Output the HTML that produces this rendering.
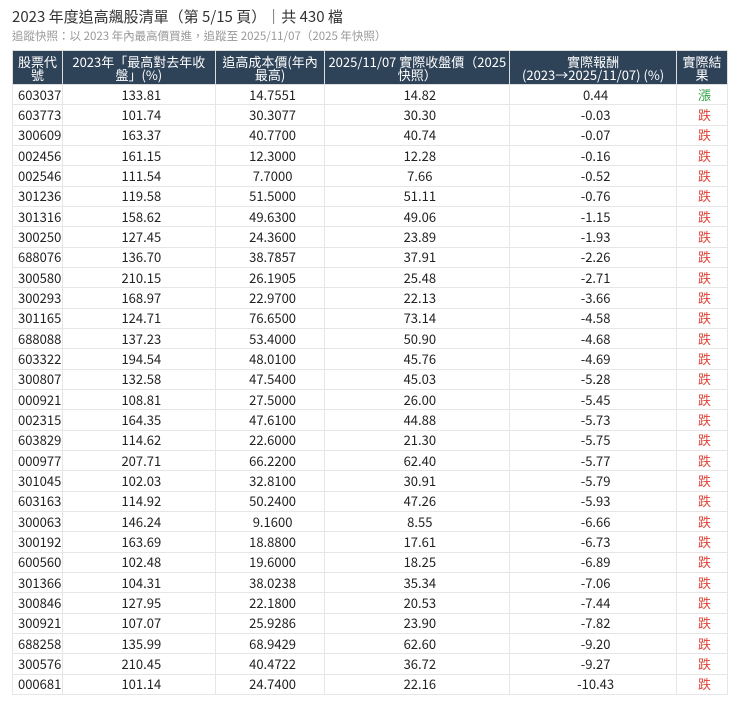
<!DOCTYPE html>
<html><head><meta charset="utf-8"><style>
body{margin:0;background:#fff;font-family:"Noto Sans CJK TC",sans-serif;color:#222;}
.t{position:absolute;left:12px;top:7px;font-size:15px;color:#333;line-height:20px;}
.s{position:absolute;left:12px;top:28px;font-size:11.5px;color:#999;line-height:16px;}
table{position:absolute;left:12px;top:50px;border-collapse:collapse;width:716px;font-size:13px;}
th{background:#2e4258;color:#fff;font-weight:normal;height:33px;line-height:13px;padding:0 8px;border:1px solid #ddd;}
td{height:19.33px;padding:0 0 0 5px;border:1px solid #e6e6e6;text-align:center;line-height:14px;}
td:first-child{text-align:left;}
.r{color:#e0453a}.g{color:#2ea043}
</style></head><body>
<div class="t">2023 年度追高飆股清單（第 5/15 頁）｜共 430 檔</div>
<div class="s">追蹤快照：以 2023 年內最高價買進，追蹤至 2025/11/07（2025 年快照）</div>
<table>
<colgroup><col style="width:50px"><col style="width:153px"><col style="width:110px"><col style="width:185px"><col style="width:167px"><col style="width:51px"></colgroup>
<tr><th style="padding:0 2px">股票代號</th><th>2023年「最高對去年收盤」(%)</th><th style="padding:0 2px">追高成本價(年內最高)</th><th style="padding:0 2px">2025/11/07 實際收盤價（2025快照）</th><th>實際報酬<br>(2023→2025/11/07) (%)</th><th style="padding:0 2px">實際結果</th></tr>
<tr><td>603037</td><td>133.81</td><td>14.7551</td><td>14.82</td><td>0.44</td><td class="g">漲</td></tr>
<tr><td>603773</td><td>101.74</td><td>30.3077</td><td>30.30</td><td>-0.03</td><td class="r">跌</td></tr>
<tr><td>300609</td><td>163.37</td><td>40.7700</td><td>40.74</td><td>-0.07</td><td class="r">跌</td></tr>
<tr><td>002456</td><td>161.15</td><td>12.3000</td><td>12.28</td><td>-0.16</td><td class="r">跌</td></tr>
<tr><td>002546</td><td>111.54</td><td>7.7000</td><td>7.66</td><td>-0.52</td><td class="r">跌</td></tr>
<tr><td>301236</td><td>119.58</td><td>51.5000</td><td>51.11</td><td>-0.76</td><td class="r">跌</td></tr>
<tr><td>301316</td><td>158.62</td><td>49.6300</td><td>49.06</td><td>-1.15</td><td class="r">跌</td></tr>
<tr><td>300250</td><td>127.45</td><td>24.3600</td><td>23.89</td><td>-1.93</td><td class="r">跌</td></tr>
<tr><td>688076</td><td>136.70</td><td>38.7857</td><td>37.91</td><td>-2.26</td><td class="r">跌</td></tr>
<tr><td>300580</td><td>210.15</td><td>26.1905</td><td>25.48</td><td>-2.71</td><td class="r">跌</td></tr>
<tr><td>300293</td><td>168.97</td><td>22.9700</td><td>22.13</td><td>-3.66</td><td class="r">跌</td></tr>
<tr><td>301165</td><td>124.71</td><td>76.6500</td><td>73.14</td><td>-4.58</td><td class="r">跌</td></tr>
<tr><td>688088</td><td>137.23</td><td>53.4000</td><td>50.90</td><td>-4.68</td><td class="r">跌</td></tr>
<tr><td>603322</td><td>194.54</td><td>48.0100</td><td>45.76</td><td>-4.69</td><td class="r">跌</td></tr>
<tr><td>300807</td><td>132.58</td><td>47.5400</td><td>45.03</td><td>-5.28</td><td class="r">跌</td></tr>
<tr><td>000921</td><td>108.81</td><td>27.5000</td><td>26.00</td><td>-5.45</td><td class="r">跌</td></tr>
<tr><td>002315</td><td>164.35</td><td>47.6100</td><td>44.88</td><td>-5.73</td><td class="r">跌</td></tr>
<tr><td>603829</td><td>114.62</td><td>22.6000</td><td>21.30</td><td>-5.75</td><td class="r">跌</td></tr>
<tr><td>000977</td><td>207.71</td><td>66.2200</td><td>62.40</td><td>-5.77</td><td class="r">跌</td></tr>
<tr><td>301045</td><td>102.03</td><td>32.8100</td><td>30.91</td><td>-5.79</td><td class="r">跌</td></tr>
<tr><td>603163</td><td>114.92</td><td>50.2400</td><td>47.26</td><td>-5.93</td><td class="r">跌</td></tr>
<tr><td>300063</td><td>146.24</td><td>9.1600</td><td>8.55</td><td>-6.66</td><td class="r">跌</td></tr>
<tr><td>300192</td><td>163.69</td><td>18.8800</td><td>17.61</td><td>-6.73</td><td class="r">跌</td></tr>
<tr><td>600560</td><td>102.48</td><td>19.6000</td><td>18.25</td><td>-6.89</td><td class="r">跌</td></tr>
<tr><td>301366</td><td>104.31</td><td>38.0238</td><td>35.34</td><td>-7.06</td><td class="r">跌</td></tr>
<tr><td>300846</td><td>127.95</td><td>22.1800</td><td>20.53</td><td>-7.44</td><td class="r">跌</td></tr>
<tr><td>300921</td><td>107.07</td><td>25.9286</td><td>23.90</td><td>-7.82</td><td class="r">跌</td></tr>
<tr><td>688258</td><td>135.99</td><td>68.9429</td><td>62.60</td><td>-9.20</td><td class="r">跌</td></tr>
<tr><td>300576</td><td>210.45</td><td>40.4722</td><td>36.72</td><td>-9.27</td><td class="r">跌</td></tr>
<tr><td>000681</td><td>101.14</td><td>24.7400</td><td>22.16</td><td>-10.43</td><td class="r">跌</td></tr>
</table>
</body></html>
